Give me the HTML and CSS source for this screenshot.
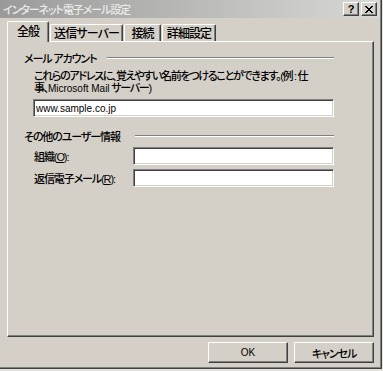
FILE: index.html
```html
<!DOCTYPE html>
<html lang="ja">
<head>
    <meta charset="UTF-8">
    <meta name="viewport" content="width=device-width, initial-scale=1.0">
    <title>インターネット電子メール設定</title>
    <link rel="stylesheet" href="styles.css">
</head>
<body>
    <div class="window">
        <div class="titlebar">
            <span class="title">インターネット電子メール設定</span>
            <div class="caption-buttons">
                <span class="caption-btn help">?</span>
                <span class="caption-btn">
                    <svg width="8" height="7" viewBox="0 0 8 7" shape-rendering="crispEdges">
                        <path d="M0 0h2v1h-2zM6 0h2v1h-2zM1 1h2v1h-2zM5 1h2v1h-2zM2 2h4v1h-4zM3 3h2v1h-2zM2 4h4v1h-4zM1 5h2v1h-2zM5 5h2v1h-2zM0 6h2v1h-2zM6 6h2v1h-2z" fill="#000"/>
                    </svg>
                </span>
            </div>
        </div>

        <div class="dialog">
            <div class="tabs">
                <div class="tab active">全般</div>
                <div class="tab">送信サーバー</div>
                <div class="tab">接続</div>
                <div class="tab">詳細設定</div>
            </div>

            <div class="panel">
                <div class="group-title">
                    <span>メール アカウント</span>
                    <span class="rule"></span>
                </div>
                <p class="note">これらのアドレスに、覚えやすい名前をつけることができます。(例 : 仕<br>事、<span class="latin">Microsoft Mail</span> サーバー)</p>
                <div class="field wide"><span class="latin">www.sample.co.jp</span></div>

                <div class="group-title second">
                    <span>その他のユーザー情報</span>
                    <span class="rule"></span>
                </div>
                <div class="row">
                    <label>組織(<u>O</u>):</label>
                    <div class="field"></div>
                </div>
                <div class="row">
                    <label>返信電子メール(<u>R</u>):</label>
                    <div class="field"></div>
                </div>
            </div>

            <div class="actions">
                <span class="button"><span class="latin">OK</span></span>
                <span class="button">キャンセル</span>
            </div>
        </div>
    </div>
</body>
</html>
```

FILE: styles.css
```css
body {
    margin: 0;
    background: #e4e2dc;
    font-family: "Liberation Sans", "Noto Sans CJK JP", sans-serif;
    font-size: 11px;
    font-weight: 500;
    letter-spacing: -1.1px;
    font-feature-settings: "palt";
    color: #000;
}
.latin {
    font-size: 10px;
    font-weight: normal;
    letter-spacing: 0;
}
.window {
    width: 382px;
    height: 369px;
    box-sizing: border-box;
    background: #d4d0c8;
    border-right: 1px solid #404040;
    border-bottom: 1px solid #404040;
    box-shadow: inset -1px -1px #808080;
}
.titlebar {
    height: 18px;
    width: 380px;
    display: flex;
    align-items: center;
    justify-content: space-between;
    background: linear-gradient(to right, #9a9a9a, #d8d8d6);
}
.title {
    padding-left: 3px;
    color: #ecebe8;
}
.caption-buttons {
    display: flex;
    gap: 2px;
    padding-right: 3px;
}
.caption-btn {
    width: 14px;
    height: 12px;
    display: flex;
    align-items: center;
    justify-content: center;
    background: #d4d0c8;
    border: 1px solid;
    border-color: #fff #404040 #404040 #fff;
    box-shadow: inset -1px -1px #808080;
}
.caption-btn.help {
    font-family: "Liberation Sans", sans-serif;
    font-weight: bold;
    font-size: 11px;
    letter-spacing: 0;
    line-height: 12px;
}
.dialog {
    padding: 3px 7px 0 7px;
}
.tabs {
    display: flex;
    align-items: flex-end;
    height: 20px;
    gap: 1px;
}
.tab {
    height: 16px;
    line-height: 18px;
    font-size: 12px;
    text-align: center;
    letter-spacing: -0.9px;
    border-left: 1px solid #fff;
    border-top: 1px solid #fff;
    border-right: 1px solid #404040;
    box-shadow: inset -1px 0 #808080;
    border-radius: 2px 2px 0 0;
}
.tab:nth-child(1) { width: 40px; }
.tab:nth-child(2) { width: 71px; }
.tab:nth-child(3) { width: 35px; }
.tab:nth-child(4) { width: 52px; }
.tab.active {
    position: relative;
    z-index: 1;
    height: 20px;
    margin-bottom: -1px;
    line-height: 21px;
    background: #d4d0c8;
}
.panel {
    height: 296px;
    box-sizing: border-box;
    border: 1px solid;
    border-color: #fff #404040 #404040 #fff;
    box-shadow: inset -1px -1px #808080;
    padding: 9px 39px 0 16px;
}
.group-title {
    display: flex;
    align-items: center;
    height: 14px;
    white-space: nowrap;
}
.group-title.second {
    margin-top: 12px;
}
.rule {
    flex: 1;
    margin-left: 11px;
    height: 0;
    border-top: 1px solid #808080;
    border-bottom: 1px solid #fff;
}
.group-title.second .rule {
    margin-left: 15px;
}
.note {
    margin: 5px 0 0 10px;
    line-height: 12px;
    letter-spacing: -1.3px;
    white-space: nowrap;
}
.field {
    height: 18px;
    box-sizing: border-box;
    background: #fff;
    border: 1px solid;
    border-color: #808080 #fff #fff #808080;
    box-shadow: inset 1px 1px #404040, inset -1px -1px #d4d0c8;
    padding: 0 2px;
    line-height: 16px;
}
.field.wide {
    margin: 4px 0 0 9px;
}
.row {
    display: flex;
    align-items: center;
    margin-top: 4px;
    padding-left: 10px;
    white-space: nowrap;
}
.row label {
    width: 99px;
}
.row .field {
    flex: 1;
}
.actions {
    display: flex;
    justify-content: flex-end;
    gap: 6px;
    margin-top: 5px;
}
.button {
    width: 80px;
    height: 21px;
    box-sizing: border-box;
    display: flex;
    align-items: center;
    justify-content: center;
    border: 1px solid;
    border-color: #fff #404040 #404040 #fff;
    box-shadow: inset -1px -1px #808080;
}
```
